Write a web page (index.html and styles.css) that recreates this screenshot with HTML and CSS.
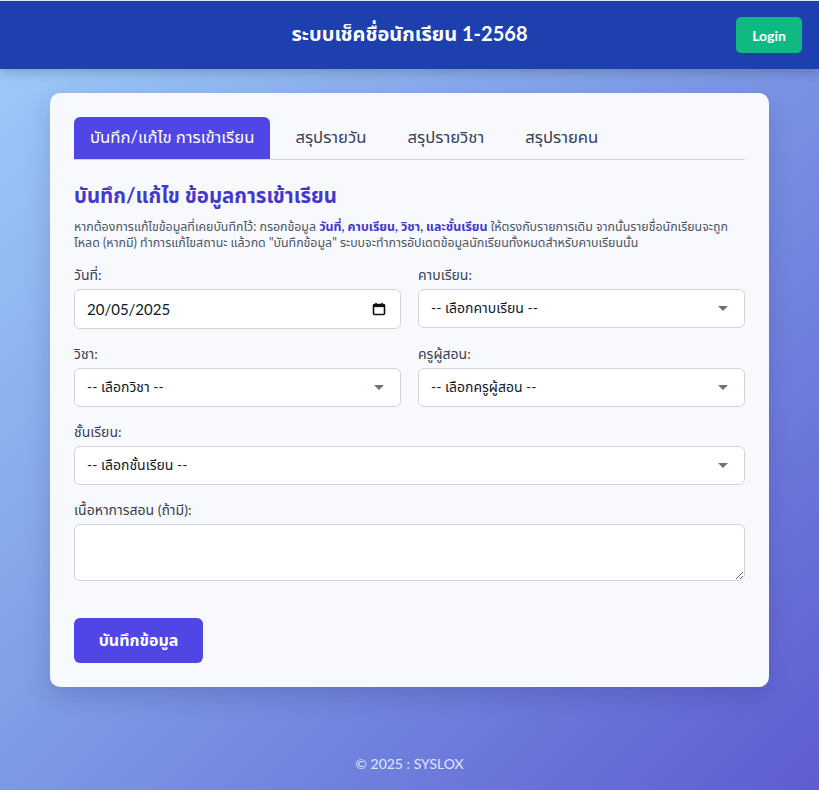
FILE: index.html
```html
<!DOCTYPE html>
<html lang="th">
<head>
<meta charset="utf-8">
<title>ระบบเช็คชื่อนักเรียน 1-2568</title>
<link rel="stylesheet" href="styles.css">
</head>
<body>
<header class="topbar">
  <h1 class="title">ระบบเช็คชื่อนักเรียน 1-2568</h1>
  <button class="login">Login</button>
</header>
<main class="main">
  <section class="card">
    <nav class="tabs">
      <span class="tab active">บันทึก/แก้ไข การเข้าเรียน</span>
      <span class="tab">สรุปรายวัน</span>
      <span class="tab">สรุปรายวิชา</span>
      <span class="tab">สรุปรายคน</span>
    </nav>
    <h2 class="heading">บันทึก/แก้ไข ข้อมูลการเข้าเรียน</h2>
    <p class="desc">หากต้องการแก้ไขข้อมูลที่เคยบันทึกไว้: กรอกข้อมูล <b>วันที่, คาบเรียน, วิชา, และชั้นเรียน</b> ให้ตรงกับรายการเดิม จากนั้นรายชื่อนักเรียนจะถูกโหลด (หากมี) ทำการแก้ไขสถานะ แล้วกด "บันทึกข้อมูล" ระบบจะทำการอัปเดตข้อมูลนักเรียนทั้งหมดสำหรับคาบเรียนนั้น</p>
    <div class="grid">
      <div class="field">
        <label class="label">วันที่:</label>
        <div class="control date">
          <span>20/05/2025</span>
          <svg class="cal" width="14" height="14" viewBox="0 0 14 14"><rect x="1.5" y="2.5" width="11" height="10" rx="1" fill="none" stroke="#111" stroke-width="1.6"/><rect x="1.5" y="2.5" width="11" height="2.6" fill="#111"/><line x1="4" y1="0.8" x2="4" y2="3" stroke="#111" stroke-width="1.4"/><line x1="10" y1="0.8" x2="10" y2="3" stroke="#111" stroke-width="1.4"/></svg>
        </div>
      </div>
      <div class="field">
        <label class="label">คาบเรียน:</label>
        <div class="control select"><span>-- เลือกคาบเรียน --</span><i class="caret"></i></div>
      </div>
      <div class="field">
        <label class="label">วิชา:</label>
        <div class="control select"><span>-- เลือกวิชา --</span><i class="caret"></i></div>
      </div>
      <div class="field">
        <label class="label">ครูผู้สอน:</label>
        <div class="control select"><span>-- เลือกครูผู้สอน --</span><i class="caret"></i></div>
      </div>
      <div class="field full">
        <label class="label">ชั้นเรียน:</label>
        <div class="control select"><span>-- เลือกชั้นเรียน --</span><i class="caret"></i></div>
      </div>
      <div class="field full">
        <label class="label">เนื้อหาการสอน (ถ้ามี):</label>
        <textarea class="textarea"></textarea>
      </div>
    </div>
    <button class="save">บันทึกข้อมูล</button>
  </section>
</main>
<footer class="footer">© 2025 : SYSLOX</footer>
</body>
</html>
```
FILE: styles.css
```css
* { box-sizing: border-box; }
html, body { margin: 0; padding: 0; }
body {
  font-family: Lato, "Noto Sans", "Noto Sans Thai", sans-serif;
  min-height: 790px;
  background: linear-gradient(135deg, #9fcdfb 0%, #7f9ee6 45%, #5e5cd2 100%);
  color: #1f2937;
  display: flex;
  flex-direction: column;
  border-top: 1px solid #dfe6f5;
}
.topbar {
  height: 68px;
  background: #1e40af;
  display: flex;
  align-items: center;
  justify-content: center;
  position: relative;
  box-shadow: 0 4px 10px rgba(0,0,0,0.18);
}
.title {
  margin: 0;
  color: #fff;
  font-size: 20px;
  font-weight: 700;
}
.login {
  position: absolute;
  right: 17px;
  top: 16px;
  width: 66px;
  height: 36px;
  background: #10b981;
  color: #fff;
  border: 0;
  border-radius: 5px;
  font-family: inherit;
  font-weight: 700;
  font-size: 14px;
}
.main {
  padding: 24px 50px 0;
}
.card {
  background: #f8f9fd;
  border-radius: 10px;
  padding: 24px;
  box-shadow: 0 10px 25px rgba(30,30,90,0.18);
}
.tabs {
  display: flex;
  gap: 9px;
  border-bottom: 1px solid #d1d5db;
  height: 43px;
}
.tab {
  padding: 0 16px;
  display: flex;
  align-items: center;
  font-size: 16.7px;
  color: #374151;
  border-radius: 6px 6px 0 0;
}
.tab.active {
  background: #4f46e5;
  color: #fff;
}
.heading {
  margin: 21px 0 0;
  color: #4338ca;
  font-size: 20.4px;
  font-weight: 700;
  line-height: 28px;
}
.desc {
  margin: 10px 0 0;
  font-size: 12.4px;
  line-height: 16px;
  color: #4b5563;
}
.desc b { color: #4338ca; }
.grid {
  margin-top: 14px;
  display: grid;
  grid-template-columns: 1fr 1fr;
  column-gap: 17px;
  row-gap: 15px;
}
.field.full { grid-column: 1 / span 2; }
.label {
  display: block;
  font-size: 14px;
  color: #374151;
  line-height: 20px;
  margin-bottom: 4px;
}
.control {
  height: 39px;
  background: #fff;
  border: 1px solid #d1d5db;
  border-radius: 6px;
  display: flex;
  align-items: center;
  justify-content: space-between;
  padding: 0 12px;
  font-size: 14px;
  color: #111827;
}
.control.date { height: 40px; }
.date span { font-size: 15px; }
.cal { margin-right: 2px; }
.caret {
  width: 0; height: 0;
  border-left: 5px solid transparent;
  border-right: 5px solid transparent;
  border-top: 5px solid #6b7280;
  margin-right: 4px;
}
.textarea {
  display: block;
  width: 100%;
  height: 57px;
  border: 1px solid #d1d5db;
  border-radius: 6px;
  background: #fff;
  resize: vertical;
  font-family: inherit;
}
.save {
  margin-top: 37px;
  width: 129px;
  height: 45px;
  background: #4f46e5;
  color: #fff;
  border: 0;
  border-radius: 6px;
  font-family: inherit;
  font-size: 16px;
  font-weight: 700;
}
.footer {
  margin-top: auto;
  text-align: center;
  color: #e0e7ff;
  font-size: 14px;
  padding-bottom: 18px;
}
```
